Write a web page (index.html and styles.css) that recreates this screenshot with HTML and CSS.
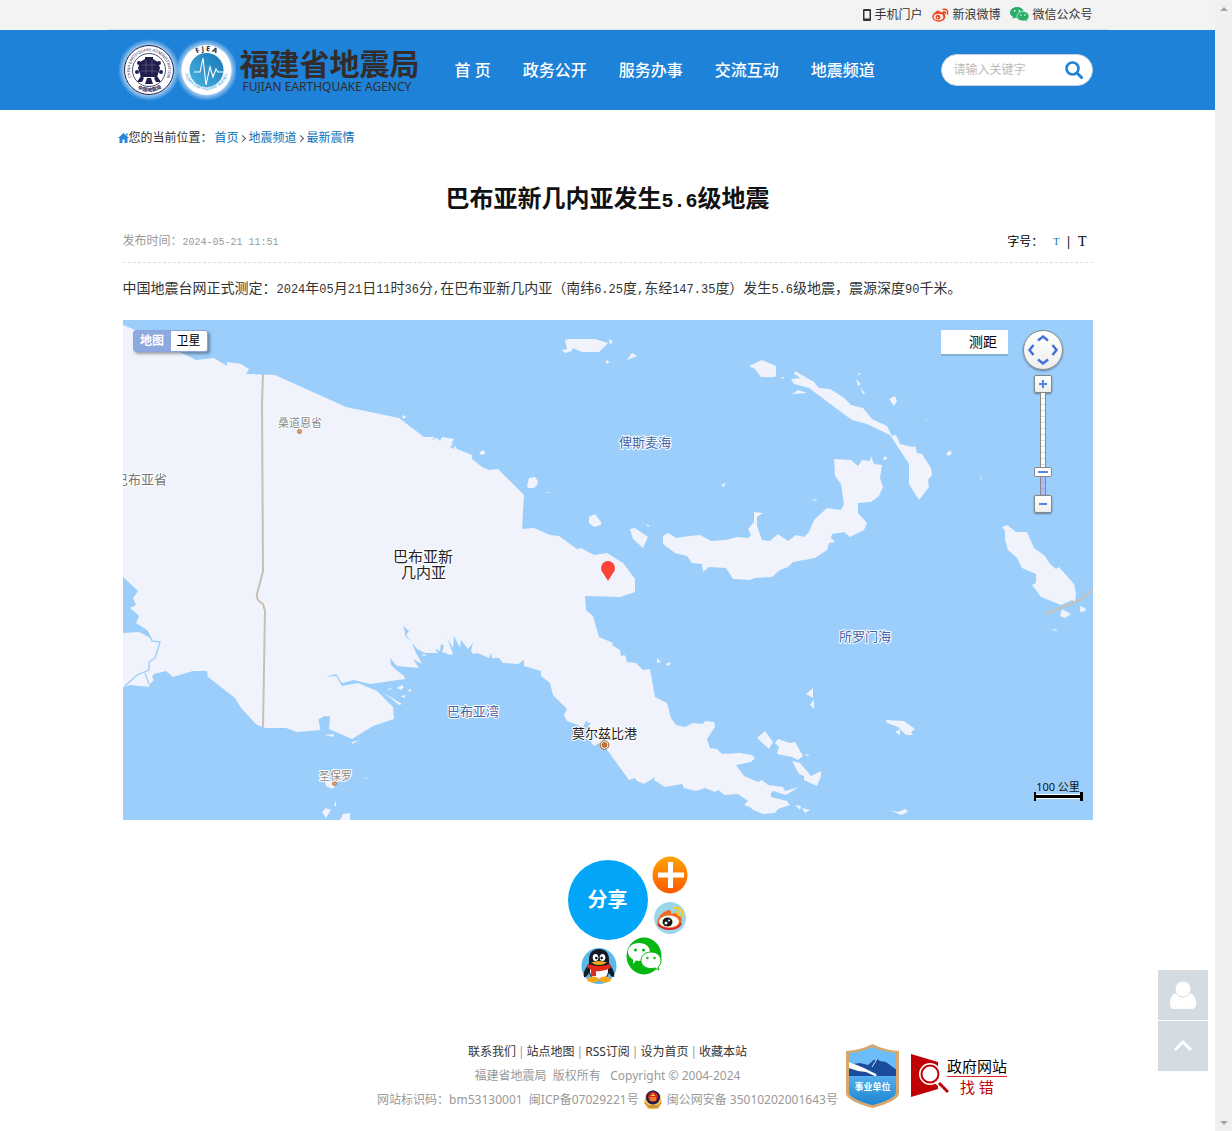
FILE: index.html
```html
<!DOCTYPE html>
<html lang="zh-CN">
<head>
  <meta charset="utf-8">
  <title>巴布亚新几内亚发生5.6级地震</title>
  <link rel="stylesheet" href="styles.css">
</head>
<body>
<div class="page">
  <div class="content">

    <div class="topbar">
      <div class="topbar-inner">
        <a class="top-link" href="#"><svg width="8" height="12" viewBox="0 0 8 12"><path d="M1 0h6q1 0 1 1v10q0 1-1 1H1q-1 0-1-1V1q0-1 1-1zM1.500 2v7.500h5V2z" fill="#333" fill-rule="evenodd"/></svg>手机门户</a>
        <a class="top-link" href="#"><svg width="17" height="14" viewBox="0 0 17 14"><ellipse cx="6.800" cy="8.800" rx="6.600" ry="5" fill="#f7431c"/><path d="M2 6Q4 2 7 2.500L8 5l4-1 1 4z" fill="#f7431c"/><ellipse cx="6.500" cy="9" rx="4.800" ry="3.200" fill="#f3f3f3"/><circle cx="6" cy="9.200" r="2.400" fill="#f7431c"/><circle cx="5.600" cy="9.600" r=".8" fill="#fff"/><path d="M10.500 1.500q6-1.500 5 5M11 4q3-.8 2.500 2" fill="none" stroke="#f7431c" stroke-width="1.400"/></svg>新浪微博</a>
        <a class="top-link" href="#"><svg width="19" height="15" viewBox="0 0 19 15"><path d="M7 0c4 0 7 2.500 7 5.500S11 11 7 11l-2-.3L2.500 12 3 9.800C1 9 0 7.500 0 5.500 0 2.500 3 0 7 0z" fill="#2aae67"/><path d="M13 4.500c3.400 0 6 2 6 4.800 0 1.500-.8 2.700-2 3.500l.4 1.900-2.200-1c-4.500 1-8.200-1-8.200-4.400 0-2.800 2.600-4.800 6-4.800z" fill="#2aae67" stroke="#f3f3f3" stroke-width=".7"/><g fill="#fff"><circle cx="4.700" cy="3.800" r=".9"/><circle cx="9.300" cy="3.800" r=".9"/><circle cx="11" cy="8" r=".8"/><circle cx="15" cy="8" r=".8"/></g></svg>微信公众号</a>
      </div>
    </div>

    <header class="header">
      <div class="header-inner">
        <a class="logo" href="#">
          <svg class="logo-marks" width="118" height="64" viewBox="0 0 118 64">
            <defs>
              <radialGradient id="glow"><stop offset=".75" stop-color="#fff" stop-opacity=".75"/><stop offset="1" stop-color="#fff" stop-opacity="0"/></radialGradient>
              <linearGradient id="globe" x1="0" y1="1" x2="1" y2="0"><stop offset="0" stop-color="#4cb4e4"/><stop offset="1" stop-color="#1676b4"/></linearGradient>
              <path id="ringChina" d="M18.500 46.500a19 19 0 1 1 25 0"/>
              <path id="ringCn" d="M18 49.500a22 22 0 0 0 27-1"/>
              <path id="fjea" d="M69.500 32a19 19 0 0 1 38 0"/>
              <path id="ringFj" d="M66.500 34a22.500 22.500 0 0 0 44 0"/>
            </defs>
            <circle cx="31" cy="32" r="31" fill="url(#glow)"/>
            <circle cx="88.500" cy="32" r="31" fill="url(#glow)"/>
            <circle cx="31" cy="32" r="24.500" fill="#fff" stroke="#25244f"/>
            <circle cx="31" cy="32" r="16.500" fill="#fff" stroke="#25244f" stroke-width=".8"/>
            <text class="ring-text"><textPath href="#ringChina" startOffset="50%">CHINA EARTHQUAKE ADMINISTRATION</textPath></text>
            <text class="ring-cn"><textPath href="#ringCn" startOffset="50%">中国地震局</textPath></text>
            <g fill="#211f4d"><path d="M27 19h8v2l5 3 2 6-3 9H23l-3-9 2-6 5-3z"/><path d="M23 38l-4 6h5l2-4zM39 38l4 6h-5l-2-4zM29 40h4l2 6h-8z"/><circle cx="21" cy="25" r="2"/><circle cx="41" cy="25" r="2"/><circle cx="19" cy="34" r="2"/><circle cx="43" cy="34" r="2"/></g>
            <path d="M24 27h14M23 33h16M28 22v14M34 22v14" stroke="#fff" stroke-width=".5" opacity=".4"/>
            <circle cx="88.500" cy="32" r="25" fill="#fff"/>
            <circle cx="88.500" cy="32" r="17" fill="url(#globe)"/>
            <path d="M76 34h6l3-14 3 27 4-18 3 10 3-8 2 3h5" fill="none" stroke="#fff" stroke-width="1.100"/>
            <text class="ring-fjea"><textPath href="#fjea" startOffset="50%">F J E A</textPath></text>
            <text class="ring-blue"><textPath href="#ringFj" startOffset="50%">FUJIAN EARTHQUAKE AGENCY</textPath></text>
          </svg>
          <span class="logo-text">
            <strong class="logo-cn">福建省地震局</strong>
            <span class="logo-en">FUJIAN EARTHQUAKE AGENCY</span>
          </span>
        </a>
        <nav class="nav">
          <a href="#">首 页</a>
          <a href="#">政务公开</a>
          <a href="#">服务办事</a>
          <a href="#">交流互动</a>
          <a href="#">地震频道</a>
        </nav>
        <form class="search">
          <input class="search-input" type="text" placeholder="请输入关键字" aria-label="请输入关键字">
          <button class="search-button" type="button" aria-label="搜索"><svg width="18" height="18" viewBox="0 0 18 18"><circle cx="7.500" cy="7.500" r="6" fill="none" stroke="#1e82d9" stroke-width="2.600"/><path d="M12 12l4.500 4.500" stroke="#1e82d9" stroke-width="3" stroke-linecap="round"/></svg></button>
        </form>
      </div>
    </header>

    <main class="main">
      <div class="breadcrumb">
        <svg width="11" height="10" viewBox="0 0 11 10"><path d="M5.500 0L11 5H9.500v5h-3V6.500h-2V10h-3V5H0zM8 .5h1.500V3L8 1.700z" fill="#2a86dc"/></svg><span class="crumb-label">您的当前位置：</span><a href="#">首页</a><i class="crumb-sep"></i><a href="#">地震频道</a><i class="crumb-sep"></i><a href="#">最新震情</a>
      </div>

      <article class="article">
        <h1 class="title">巴布亚新几内亚发生<span class="title-num">5.6</span>级地震</h1>
        <div class="meta">
          <span class="date">发布时间：<time class="date-num">2024-05-21 11:51</time></span>
          <div class="font-size">
            <span class="font-label">字号：</span>
            <button class="font-small" type="button">T</button>
            <span>|</span>
            <button class="font-large" type="button">T</button>
          </div>
        </div>
        <p class="text">中国地震台网正式测定：<span class="num">2024</span>年<span class="num">05</span>月<span class="num">21</span>日<span class="num">11</span>时<span class="num">36</span>分<span class="num">,</span>在巴布亚新几内亚（南纬<span class="num">6.25</span>度<span class="num">,</span>东经<span class="num">147.35</span>度）发生<span class="num">5.6</span>级地震，震源深度<span class="num">90</span>千米。</p>

        <div class="map">
          <svg class="map-canvas" viewBox="123 319 970 500" preserveAspectRatio="xMidYMid slice">
            <rect x="123" y="319" width="970" height="500" fill="#9bcefa"/>
            <g fill="#f0f3fb">
              <!-- mainland -->
              <path d="M123 324L133 328 180 351 196 359 214 357 227 365 227 361 241 363 249 368 246 373 275 374 346 406 399 417 424 436 435 436 431 439 437 437 440 440 442 436 454 438 451 443 454 442 450 446 454 448 455 444 457 448 472 454 472 458 482 466 489 469 498 468 524 494 522 528 534 527 550 534 559 535 577 548 581 547 594 554 607 552 623 562 635 578 635 591 620 596 585 595 586 609 593 615 599 636 613 642 612 644 620 649 621 655 625 653 627 661 636 662 643 669 650 668 655 696 667 702 671 717 676 724 685 726 693 722 703 723 705 720 714 721 715 726 707 738 710 747 717 748 722 753 740 752 752 754 755 757 751 761 736 764 744 775 758 781 762 779 768 784 783 786 785 790 799 786 786 794 773 790 771 792 771 796 787 800 790 804 778 808 775 812 763 813 753 809 750 806 744 804 748 800 738 793 725 794 718 789 715 791 705 787 696 790 684 787 682 783 665 786 654 779 655 776 644 783 637 780 635 777 629 779 605 746 601 742 597 743 595 745 592 743 590 738 584 731 589 722 586 720 583 726 567 720 564 714 567 708 553 694 550 682 541 675 541 670 524 665 524 659 518 663 503 662 499 657 492 657 491 652 489 657 480 653 477 652 473 653 471 650 473 642 468 648 461 639 460 647 454 635 453 647 447 637 453 653 450 654 442 651 444 645 441 643 440 650 435 648 438 652 425 652 417 648 411 640 406 634 409 630 403 625 405 631 405 635 412 641 415 650 422 663 413 658 419 667 397 665 390 657 391 664 395 668 404 675 405 678 370 683 354 679 342 682 336 673 326 676 336 675 342 685 358 682 377 690 393 706 394 718 373 725 352 738 329 728 330 716 323 716 319 718 321 729 297 731 286 727 266 727 257 724 241 707 235 697 208 676 207 670 193 670 173 676 166 670 154 673 152 676 154 679 149 684 149 686 130 684 123 686Z"/>
              <!-- north islands -->
              <path d="M562 349l5-1-2-9 4-1h26l13 4-9 9h-17l-9-4-1 3-7 2zM609 338l4 2-3 4zM627 359l5-7 5 3zM606 359l4 2-4 2z"/>
              <path d="M749 365l13-6 14 6v9l-1 2h-14l-6-8zM780 376h4l-1 2zM792 393l6-4 9 3zM791 378l10-1-7-4 1-3 19 11 5 6 11 1 13 8 8 8 12 3 9 11 15 7 5 10 4-1 4 9 12 3 3-1 2 7 5 1 9 14 1 7-4 5 1 7-10 13-10-16v-20l-19-29-23-11-15-4-15-11-28-21-15-4zM857 373l4-1-1 2zM856 378l5 5-3 2zM860 386l5 6-2 1zM889 398l6-3 2 5-3 5zM925 418h2l1 1zM946 453l4-4 2 3-3 3z"/>
              <path d="M834 458l17 1 7 6 4-6 8 1 1-5 3 8 8 1-2 13 3 9-4 9-8 6-13 1v10l9 10-3 7-14 7-6-5-12 2-1 4 4 4-6 1-2 7-12 8-22 4-5 5-8 3-8 7-17 1-5 2-17-1-7-11-17-1-6 5-1-8-10-1-5-7-12-3-12-9v-8l5-3 8 5 13-2 11-1 11 6 15-1 11-3 11 1 3-3-3-6 6-7v-10l9 1-6 4v9l5 14 8 1 8-7 10 7 8-6 8 2 5-5 5-12 13-12 14 2 3-6-3-20-6-8z"/>
              <path d="M527 485l2-8 6-1 3 4-1 4-3 3h-6zM545 491h4l-1 1zM589 516l6-3 6 8v3l-7 2-5-4zM630 528l5-1 13 9-5 11-10-9zM646 523l4 2-2 1zM721 484l5-2-2 4zM812 498l6 1-4 1zM883 457l3-2 1 3-3 1zM402 414l5 2-4 2zM479 452l4-3 3 3-4 2z"/>
              <path d="M979 474l3 3-1 3z" opacity=".5"/>
              <!-- bougainville -->
              <path d="M1007 524l9 7h11l7 16 11 8 5 8 6 5 3-2 15 17 2 9-1 9-3-2-11 5-20-8-9-12 4-2v-9l-14-6-5-10-9-8-3-10v-9l-3-4zM1062 608l9 5-6 4-5-2zM1080 605l5 2 1 3-6 1zM1051 629l4-1 3 2z"/>
              <!-- south east -->
              <path d="M657 657l4 4-4 1zM665 663l6-2-2 4zM806 693l7-6v10zM810 704l4-6v10zM812 712l5-1zM757 737l8-7 8 11-4 7zM775 742l3-4 12 4 5-1 8 14-5 4-6-3-15-3 2-7zM805 753l5 1-3 1zM792 760l8 2 11 13 10-5v5l-4 10-13-6v-4l-5-2zM795 804l6 1-1 4zM802 807l8 2-5 3zM886 719l18 1 11 8-4 3 2 3h-7l-8-8-11-4zM895 731l5-3v6zM879 813l4-1zM890 809l8 2 8-3 2 3-7 3z"/>
              <path d="M325 734l9-1-1 3zM352 741l8-2-8 4zM387 688l5-1-2 2zM397 687l5-3 2 2-3 3zM384 692l18 11-3 1zM401 695l5-1-2 3zM407 689l4-1v3zM363 777l6 1-4 0zM325 780l8 1 3 4-4 3-6-3zM334 805l2-6v6zM322 811l4-4 5 2-5 8zM340 819l3-6 7-1v7zM421 654l4-1 1 2z"/>
            </g>
            <path d="M123 576l15 14-5 7 3 7-6 3 9 8-3 7 11 7 5 9-7-4-6-3-16 1z" fill="#9bcefa"/>
            <path d="M147 630l5 10 8 1-5 16-6 4v8l-12 5-12 11M145 672l4 11M319 718l2 11M323 716l7 0M590 722l-6 8M621 653l4 1" fill="none" stroke="#9bcefa" stroke-width="1.300"/>
            <path d="M263 373l-1 30 1 167-6 23q-1 6 6 10l2 7-2 116" fill="none" stroke="#c8c0b5" stroke-width="2"/>
            <path d="M1045 613l30-12q10-4 18-13" fill="none" stroke="#c8c0b5" stroke-width="2"/>
            <g fill="#e0a06e" stroke="#bb7748"><circle cx="299.500" cy="430.500" r="2"/><circle cx="334.500" cy="782.500" r="2"/></g>
            <path d="M608 580l-5-8q-2-2-2-5a7 7 0 0 1 14 0q0 3-2 5z" fill="#fb4437"/>
            <g class="map-label">
              <text class="label-town" x="278" y="426">桑道恩省</text>
              <text class="label-town" x="319" y="779">圣保罗</text>
              <text class="label-province" x="115" y="483">巴布亚省</text>
              <text class="label-country" x="393" y="561">巴布亚新</text>
              <text class="label-country" x="401" y="577">几内亚</text>
              <text class="label-city" x="572" y="737">莫尔兹比港</text>
              <text class="label-sea" x="619" y="446">俾斯麦海</text>
              <text class="label-sea" x="839" y="640">所罗门海</text>
              <text class="label-sea" x="447" y="715">巴布亚湾</text>
            </g>
            <circle cx="604.500" cy="744" r="4.300" fill="#fff" stroke="#93602b"/><circle cx="604.500" cy="744" r="2.500" fill="#dc6c28" stroke="#93602b" stroke-width=".8"/>
          </svg>

          <div class="map-type">
            <button class="type-button type-active" type="button">地图</button>
            <button class="type-button" type="button">卫星</button>
          </div>

          <div class="map-tools">
            <button class="measure-button" type="button">测距</button>
            <div class="navigator">
              <div class="pan">
                <button class="pan-button pan-up" type="button" aria-label="向上"><svg width="12" height="8" viewBox="0 0 12 8"><path d="M1 6.500l5-4 5 4"/></svg></button>
                <button class="pan-button pan-left" type="button" aria-label="向左"><svg width="8" height="12" viewBox="0 0 8 12"><path d="M6.500 1l-4 5 4 5"/></svg></button>
                <button class="pan-button pan-right" type="button" aria-label="向右"><svg width="8" height="12" viewBox="0 0 8 12"><path d="M1.500 1l4 5-4 5"/></svg></button>
                <button class="pan-button pan-down" type="button" aria-label="向下"><svg width="12" height="8" viewBox="0 0 12 8"><path d="M1 1.500l5 4 5-4"/></svg></button>
              </div>
              <button class="zoom-button" type="button" aria-label="放大"><svg width="8" height="8" viewBox="0 0 8 8"><path d="M0 4h8M4 0v8"/></svg></button>
              <input class="zoom-slider" type="range" min="0" max="100" value="20" aria-label="缩放级别">
              <button class="zoom-button" type="button" aria-label="缩小"><svg width="8" height="8" viewBox="0 0 8 8"><path d="M0 4h8"/></svg></button>
            </div>
          </div>

          <div class="map-scale"><span>100 公里</span><i class="scale-bar"></i></div>
        </div>
      </article>

      <div class="share">
        <button class="share-main" type="button">分享</button>
        <a class="share-icon share-more" href="#" aria-label="更多"><svg width="36" height="38" viewBox="0 0 36 38"><defs><linearGradient id="orange" x2="0" y2="1"><stop offset="0" stop-color="#ffa200"/><stop offset="1" stop-color="#ff5800"/></linearGradient></defs><ellipse cx="18" cy="19" rx="17.500" ry="18.500" fill="url(#orange)"/><path d="M18.500 6v26M6 19h26" stroke="#fff" stroke-width="5"/></svg></a>
        <a class="share-icon share-weibo" href="#" aria-label="新浪微博"><svg width="32" height="32" viewBox="0 0 32 32"><circle cx="16" cy="16" r="16" fill="#9cd6e8"/><path d="M3 21Q4 12 14 8q4 0 3 4 8-3 9 2 3 2 1 7-4 6-12 6T3 21z" fill="#f26a21"/><path d="M4 22q3 5 12 5t11-6" fill="none" stroke="#da2428" stroke-width="2"/><ellipse cx="15" cy="19.500" rx="10" ry="6" fill="#fff"/><ellipse cx="13.500" cy="20" rx="5" ry="4.500" fill="#161616"/><circle cx="12" cy="21" r="1.500" fill="#fff"/><circle cx="15" cy="18.500" r="1" fill="#fff"/><path d="M20 6q9-1 9 9M21 10q4 0 4 4" fill="none" stroke="#f4ca35" stroke-width="2.500"/></svg></a>
        <a class="share-icon share-wechat" href="#" aria-label="微信"><svg width="36" height="38" viewBox="0 0 36 38"><ellipse cx="18" cy="19" rx="17.500" ry="18.500" fill="#06b712"/><path d="M13 6c7 0 11 4 11 9s-4 9-11 9l-3-.5L7 27v-4.500c-3-2-5-4-5-7.500 0-5 4-9 11-9z" fill="#fff"/><path d="M25 15c6 0 10 4 10 8.500 0 3-1 5-3 6.500l1 3-4-2c-8 2-14-2-14-7.500C15 19 19 15 25 15z" fill="#fff" stroke="#06b712"/><g fill="#06b712"><circle cx="9.500" cy="13" r="1.500"/><circle cx="17.500" cy="13" r="1.500"/><circle cx="21.500" cy="21" r="1.200"/><circle cx="28.500" cy="21" r="1.200"/></g></svg></a>
        <a class="share-icon share-qq" href="#" aria-label="QQ"><svg width="36" height="38" viewBox="0 0 36 38"><ellipse cx="18" cy="19" rx="17.500" ry="18" fill="#5bb8ea"/><path d="M8 16Q7 2 18 2t10 14l3 5q3 5 2 9-3 0-5-4l-3 6H11l-3-6q-3 5-5 4-1-5 2-9z" fill="#141a26"/><path d="M9 21q9 4 18 0 1 11-9 11T9 21z" fill="#fff"/><ellipse cx="12" cy="32.500" rx="6" ry="3" fill="#f6a81b"/><ellipse cx="24" cy="32.500" rx="6" ry="3" fill="#f6a81b"/><path d="M7 17q11 4 22 0l1 4q-8 4-15 3v5h-5v-6l-4-3z" fill="#e12a1a"/><ellipse cx="14.500" cy="10.500" rx="2.800" ry="3.500" fill="#fff"/><ellipse cx="21.500" cy="10.500" rx="2.800" ry="3.500" fill="#fff"/><circle cx="15.300" cy="11" r="1.200"/><circle cx="20.700" cy="11" r="1.200"/><path d="M10 15.500q8-3 16 0-8 5-16 0z" fill="#f6a81b"/></svg></a>
      </div>
    </main>

    <footer class="footer">
      <div class="footer-text">
        <p class="footer-links"><a href="#">联系我们</a><span>|</span><a href="#">站点地图</a><span>|</span><a href="#">RSS订阅</a><span>|</span><a href="#">设为首页</a><span>|</span><a href="#">收藏本站</a></p>
        <p>福建省地震局&nbsp; 版权所有 &nbsp; Copyright © 2004-2024</p>
        <p class="record">网站标识码：bm53130001&nbsp; 闽ICP备07029221号 <svg width="18" height="20" viewBox="0 0 18 20"><path d="M9 0l7 4 2 9-4 6H4l-4-6 2-9z" fill="#f0bf57"/><path d="M1 13q8 9 16 0M4 17q5-3 10 0" fill="none" stroke="#b97a1f"/><ellipse cx="9" cy="7.500" rx="7" ry="7" fill="#201c55"/><circle cx="9" cy="7" r="5" fill="#d9261c"/><path d="M6 8h6M7 5.500h4M9 3v3M6 10h6" stroke="#f6d13e"/></svg> 闽公网安备 35010202001643号</p>
      </div>
      <div class="badges">
        <a href="#"><svg width="53" height="64" viewBox="0 0 53 64"><defs><clipPath id="shield"><path d="M3 9q13-1 23.500-6Q37 8 50 9v39q0 7-23.500 13Q3 55 3 48z"/></clipPath><linearGradient id="sea" x2="0" y2="1"><stop offset="0" stop-color="#55aeee"/><stop offset="1" stop-color="#1680cd"/></linearGradient></defs><path d="M0 7Q15 6 26.500 0 38 6 53 7v42q0 8-26.500 15Q0 57 0 49z" fill="#d9a76b"/><g clip-path="url(#shield)"><path fill="#6abdf9" d="M0 0h53v64H0z"/><path d="M0 21l14-2 8 2 8-7 4 3 6 1 12 9v8H0z" fill="#1b4b9d"/><path d="M2 18q9 3 16 6l12 6 1 3-11-5-8-1-9-3z" fill="#fff"/><path d="M28 15l3 0-5 8" fill="none" stroke="#cde7fc"/><path fill="url(#sea)" d="M0 32h53v32H0z"/></g><text class="badge-text" x="26.500" y="46" text-anchor="middle">事业单位</text></svg></a>
        <a class="error-report" href="#">
          <svg width="38" height="44" viewBox="0 0 38 44"><path d="M0 0l27 8v27L0 43z" fill="#c00004"/><circle cx="19" cy="20" r="11" fill="#fff"/><circle cx="19" cy="20" r="8.500" fill="#fff" stroke="#c00004" stroke-width="2"/><path d="M26 27l11 11" stroke="#fff" stroke-width="6"/><path d="M28 29l9 9" stroke="#c00004" stroke-width="3"/></svg>
          <span class="error-text"><span>政府网站</span><span class="error-find">找 错</span></span>
        </a>
      </div>
    </footer>
  </div>

  <div class="scrollbar"><i class="arrow-up"></i><i class="arrow-down"></i></div>
</div>

<div class="side-tools">
  <button class="side-button" type="button" aria-label="个人中心"><svg width="28" height="28" viewBox="0 0 28 28"><path d="M8 12h12q7 1 7 11 0 5-4 5H5q-4 0-4-5Q1 13 8 12z" fill="#fff"/><circle cx="14" cy="8" r="8" fill="#fff" stroke="#d4dbe1"/></svg></button>
  <button class="side-button" type="button" aria-label="返回顶部"><svg width="20" height="12" viewBox="0 0 20 12"><path d="M2 10l8-8 8 8" fill="none" stroke="#fff" stroke-width="3"/></svg></button>
</div>
</body>
</html>
```

FILE: styles.css
```css
body {
  margin: 0;
  font-family: "Noto Sans", "Noto Sans CJK SC", sans-serif;
  font-size: 12px;
  line-height: 24px;
  color: #333;
  background: #fff;
}

a {
  color: inherit;
  text-decoration: none;
}

p {
  margin: 0;
}

svg {
  display: block;
}

button {
  padding: 0;
  border: none;
  background: none;
  font: inherit;
  cursor: pointer;
}

.page {
  display: grid;
  grid-template-columns: minmax(0, 1fr) 17px;
  min-height: 100vh;
}

/* top bar */
.topbar {
  background: #f3f3f3;
}

.topbar-inner {
  display: flex;
  justify-content: flex-end;
  gap: 10px;
  max-width: 970px;
  height: 29px;
  margin: 0 auto;
  padding: 0 15px;
  border-bottom: 1px solid #d9e2ea;
}

.top-link {
  display: flex;
  align-items: center;
  gap: 3px;
}

/* header */
.header {
  background: #1e82d9;
}

.header-inner {
  display: flex;
  align-items: center;
  max-width: 980px;
  height: 80px;
  margin: 0 auto;
}

.logo {
  display: flex;
  align-items: center;
  gap: 4px;
}

.logo-text {
  display: flex;
  flex-direction: column;
  width: 182px;
  padding-top: 2px;
  color: #332c2b;
}

.logo-cn {
  font-size: 30px;
  line-height: 32px;
}

.logo-en {
  padding-left: 3px;
  font-size: 12px;
  line-height: 14px;
  white-space: nowrap;
}

.ring-text,
.ring-cn,
.ring-fjea,
.ring-blue {
  text-anchor: middle;
}

.ring-text {
  font-size: 4px;
  fill: #25244f;
}

.ring-cn {
  font-size: 5px;
  font-weight: bold;
  fill: #25244f;
}

.ring-fjea {
  font-size: 7px;
  font-weight: bold;
  fill: #222;
}

.ring-blue {
  font-size: 4px;
  fill: #2699d8;
}

.nav {
  display: flex;
  gap: 32px;
  margin-left: 33px;
  color: #fff;
  font-size: 16px;
  font-weight: 500;
}

.search {
  display: flex;
  align-items: center;
  box-sizing: border-box;
  width: 152px;
  height: 32px;
  margin-left: auto;
  margin-right: 5px;
  padding: 0 9px 0 12px;
  background: #fff;
  border: 1px solid #c9d3dc;
  border-radius: 16px;
}

.search-input {
  flex: 1;
  min-width: 0;
  padding: 0;
  border: none;
  outline: none;
  background: none;
  font: inherit;
}

.search-input::placeholder {
  color: #bbb;
}

/* content */
.main {
  max-width: 970px;
  margin: 0 auto;
}

.breadcrumb {
  display: flex;
  align-items: center;
  margin: 16px 0 0 -5px;
}

.breadcrumb a {
  color: #0b70b8;
}

.crumb-label {
  margin-right: 2px;
}

.crumb-sep {
  width: 4px;
  height: 4px;
  margin: 0 4px 0 1px;
  border-top: 1px solid #555;
  border-right: 1px solid #555;
  transform: rotate(45deg);
}

.title {
  margin: 30px 0 0;
  text-align: center;
  font-size: 24px;
  line-height: 36px;
  color: #111;
}

.title-num {
  font-family: "Liberation Mono", monospace;
  font-size: 20px;
}

.meta {
  display: flex;
  justify-content: space-between;
  align-items: center;
  height: 40px;
  padding-top: 2px;
  border-bottom: 1px dashed #ddd;
}

.date {
  color: #999;
}

.date-num {
  font-family: "Liberation Mono", monospace;
  font-size: 10px;
}

.font-size {
  display: flex;
  align-items: center;
  gap: 6px;
  padding-right: 6px;
  color: #000;
}

.font-label {
  margin-right: 4px;
}

.font-small {
  font-family: "Liberation Serif", serif;
  font-size: 10px;
  color: #0b70b8;
}

.font-large {
  font-family: "Liberation Serif", serif;
  font-size: 14px;
}

.text {
  padding: 13px 0 18px;
  font-size: 14px;
}

.num {
  font-family: "Liberation Mono", monospace;
  font-size: 12px;
}

/* map */
.map {
  position: relative;
}

.map-canvas {
  width: 100%;
  height: 500px;
}

.map-label {
  paint-order: stroke;
  stroke: #fff;
  stroke-width: 2px;
  stroke-linejoin: round;
}

.label-town {
  font-size: 11px;
  fill: #888;
}

.label-province {
  font-size: 13px;
  fill: #777;
}

.label-country {
  font-size: 15px;
  fill: #222;
}

.label-city {
  font-size: 13px;
  fill: #222;
}

.label-sea {
  font-size: 13px;
  fill: #4164a8;
}

.map-type {
  position: absolute;
  top: 10px;
  left: 10px;
  display: flex;
  border: 1px solid #8ba4dc;
  border-radius: 3px;
  background: #fff;
  box-shadow: 2px 2px 3px rgba(0, 0, 0, 0.35);
}

.type-button {
  width: 36px;
  height: 20px;
  line-height: 18px;
}

.type-active {
  width: 37px;
  background: #8ea8e0;
  color: #fff;
  font-weight: bold;
}

.map-tools {
  position: absolute;
  top: 10px;
  right: 30px;
  display: flex;
  align-items: flex-start;
  gap: 15px;
}

.measure-button {
  width: 67px;
  height: 24px;
  padding-left: 18px;
  background: #fff;
  box-shadow: 0 2px 0 #83afd6;
  font-size: 14px;
}

.navigator {
  display: flex;
  flex-direction: column;
  align-items: center;
}

.pan {
  display: grid;
  grid-template-columns: repeat(3, 12px);
  grid-template-rows: repeat(3, 12px);
  place-content: center;
  place-items: center;
  box-sizing: border-box;
  width: 40px;
  height: 40px;
  margin-bottom: 5px;
  border: 1px solid #888;
  border-radius: 50%;
  background: linear-gradient(#fff, #eee);
  box-shadow: 0 1px 2px rgba(0, 0, 0, 0.4);
}

.pan-up {
  grid-area: 1 / 2;
}

.pan-left {
  grid-area: 2 / 1;
}

.pan-right {
  grid-area: 2 / 3;
}

.pan-down {
  grid-area: 3 / 2;
}

.pan-button path {
  fill: none;
  stroke: #4272d7;
  stroke-width: 2.5;
}

.zoom-button {
  display: grid;
  place-content: center;
  box-sizing: border-box;
  width: 18px;
  height: 18px;
  border: 1px solid #888;
  border-radius: 2px;
  background: linear-gradient(#fff, #eee);
  box-shadow: 0 1px 2px rgba(0, 0, 0, 0.4);
}

.zoom-button path {
  stroke: #5583e8;
  stroke-width: 2;
}

.zoom-slider {
  appearance: none;
  writing-mode: vertical-lr;
  direction: rtl;
  width: 18px;
  height: 102px;
  margin: 0;
  background: none;
}

.zoom-slider::-webkit-slider-runnable-track {
  box-sizing: border-box;
  width: 6px;
  border: solid #888;
  border-width: 0 1px;
  background: linear-gradient(rgba(0, 0, 0, 0) 80%, rgba(90, 120, 250, 0.5) 80%), repeating-linear-gradient(#fff 0 5px, #ddd 5px 6px);
}

.zoom-slider::-webkit-slider-thumb {
  appearance: none;
  box-sizing: border-box;
  width: 18px;
  height: 10px;
  margin-left: -7px;
  border: 1px solid #888;
  border-radius: 2px;
  background: linear-gradient(#5583e8, #5583e8) center / 10px 2px no-repeat #fff;
}

.map-scale {
  position: absolute;
  right: 10px;
  bottom: 19px;
  display: flex;
  flex-direction: column;
  width: 49px;
  font-size: 11px;
  line-height: 12px;
  text-align: center;
  color: #111;
}

.scale-bar {
  height: 9px;
  margin-top: -1px;
  background:
    linear-gradient(#000, #000) left / 2px 9px no-repeat,
    linear-gradient(#000, #000) right / 3px 9px no-repeat,
    linear-gradient(#fff 0 1px, #000 1px 4px, #fff 4px 5px) center / 100% 5px no-repeat;
}

/* share */
.share {
  position: relative;
  width: 80px;
  height: 180px;
  margin: 40px auto 0;
}

.share-main {
  width: 80px;
  height: 80px;
  border-radius: 50%;
  background: #03a5f8;
  color: #fff;
  font-size: 20px;
  font-weight: bold;
}

.share-icon {
  position: absolute;
}

.share-more {
  top: -4px;
  left: 84px;
}

.share-weibo {
  top: 42px;
  left: 86px;
}

.share-wechat {
  top: 77px;
  left: 58px;
}

.share-qq {
  top: 87px;
  left: 13px;
}

/* footer */
.footer {
  display: grid;
  grid-template-columns: 1fr auto 1fr;
  gap: 8px;
  padding-bottom: 20px;
  color: #999;
}

.footer-text {
  grid-column: 2;
  text-align: center;
}

.footer-links {
  display: flex;
  justify-content: center;
  gap: 2px;
}

.footer-links a {
  color: #333;
}

.record {
  display: flex;
  align-items: center;
  gap: 5px;
}

.badges {
  display: flex;
  align-items: center;
  gap: 12px;
}

.badge-text {
  font-size: 9px;
  font-weight: bold;
  fill: #fff;
}

.error-report {
  display: flex;
  align-items: center;
}

.error-text {
  display: flex;
  flex-direction: column;
  margin-left: -2px;
  font-size: 15px;
  line-height: 20px;
  text-align: center;
  color: #000;
}

.error-find {
  border-top: 1px solid #d22;
  color: #c00004;
}

/* scrollbar */
.scrollbar {
  display: flex;
  flex-direction: column;
  justify-content: space-between;
  align-items: center;
  padding: 7px 0;
  background: #f0f0f0;
}

.arrow-up,
.arrow-down {
  border: solid transparent;
  border-width: 0 4px;
}

.arrow-up {
  border-bottom: 4px solid #a3a3a3;
}

.arrow-down {
  border-top: 4px solid #a3a3a3;
}

/* side buttons */
.side-tools {
  position: fixed;
  right: 24px;
  bottom: 60px;
  display: flex;
  flex-direction: column;
  gap: 1px;
}

.side-button {
  display: grid;
  place-content: center;
  width: 50px;
  height: 50px;
  background: #d4dbe1;
}
```
